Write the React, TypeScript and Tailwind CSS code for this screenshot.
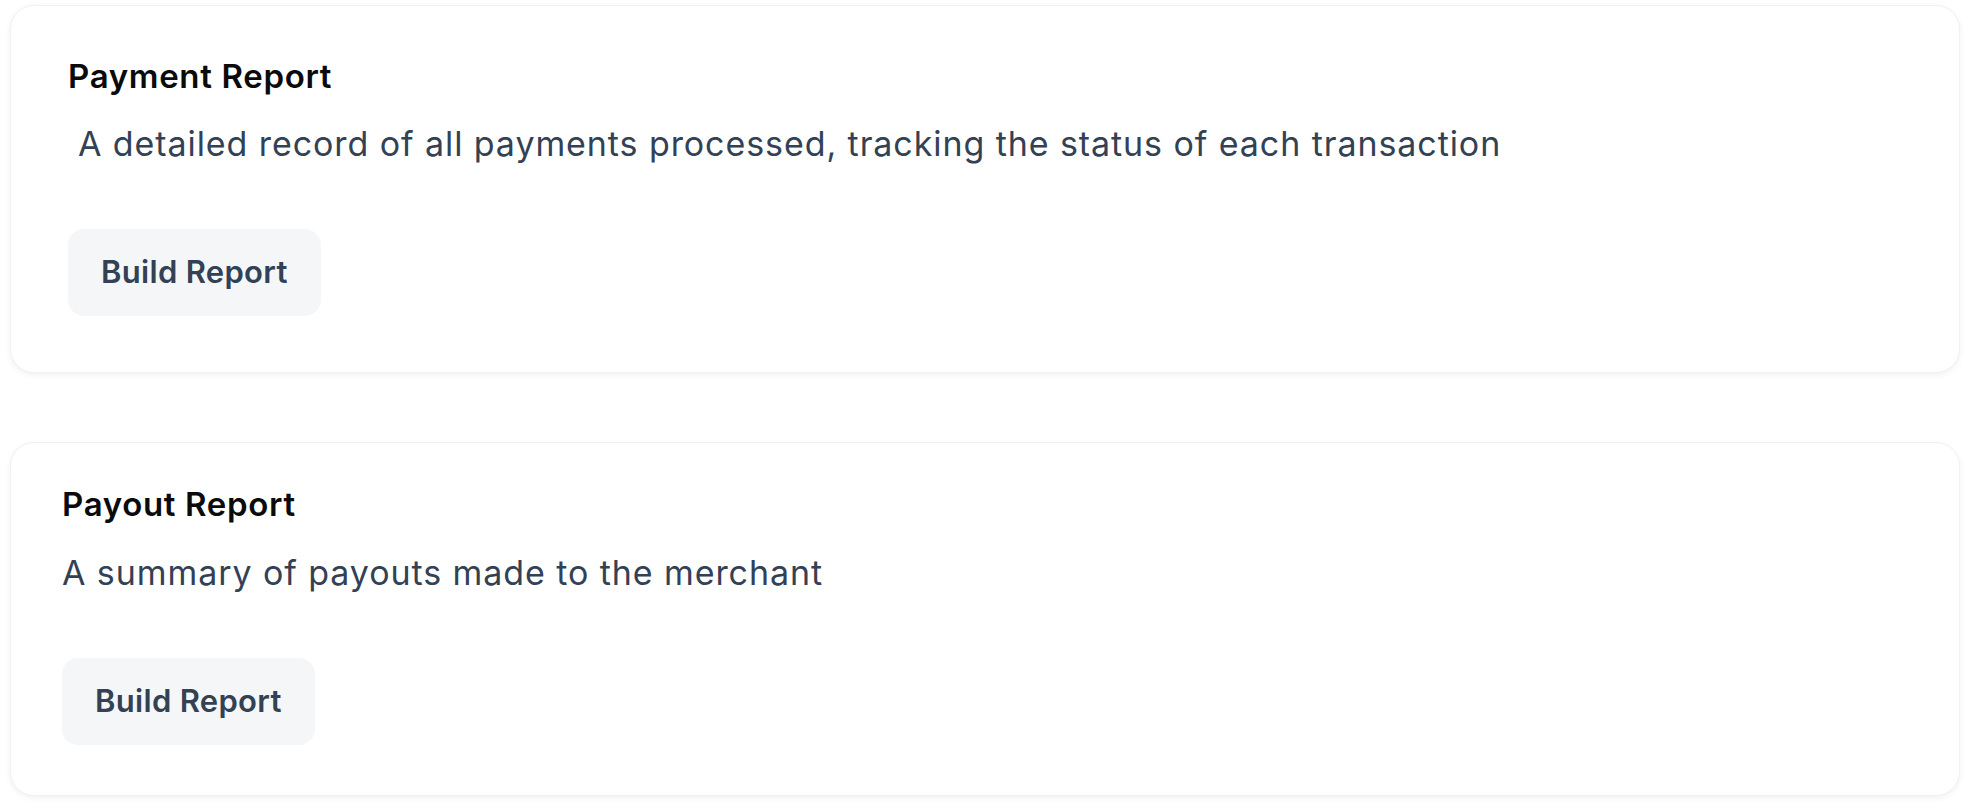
type Report = {
  title: string;
  description: string;
};

const reports: Report[] = [
  {
    title: "Payment Report",
    description:
      "A detailed record of all payments processed, tracking the status of each transaction",
  },
  { title: "Payout Report", description: "A summary of payouts made to the merchant" },
];

function BuildButton() {
  return (
    <button
      type="button"
      className="flex h-[87px] items-center self-start rounded-2xl bg-[#f4f6f8] px-[33px] text-[31px] font-semibold tracking-[0.01em] text-[#334155]"
    >
      Build Report
    </button>
  );
}

export default function App() {
  return (
    <div
      className="min-h-screen bg-white pt-[5px] pl-[10px] pr-[10px]"
      style={{ fontFamily: "Inter, 'Noto Sans', sans-serif" }}
    >
      <div className="flex flex-col gap-[69px]">
        {/* first card has a slightly roomier padding than the second */}
        <section className="flex flex-col rounded-3xl border border-[#f0f1f2] bg-white pt-[50px] pb-[56px] pl-[57px] shadow-[0_2px_6px_rgba(0,0,0,0.06)]">
          <h2 className="text-[33px] leading-[40px] font-semibold tracking-[0.02em] text-[#0b0b0c]">
            {reports[0].title}
          </h2>
          <p className="mt-[27px] pl-[10px] text-[34px] leading-[41px] tracking-[0.027em] text-[#334155]">
            {reports[0].description}
          </p>
          <div className="mt-[65px] flex">
            <BuildButton />
          </div>
        </section>

        <section className="flex flex-col rounded-3xl border border-[#f0f1f2] bg-white pt-[41px] pb-[50px] pl-[51px] shadow-[0_2px_6px_rgba(0,0,0,0.06)]">
          <h2 className="text-[33px] leading-[40px] font-semibold tracking-[0.02em] text-[#0b0b0c]">
            {reports[1].title}
          </h2>
          <p className="mt-[28px] text-[34px] leading-[41px] tracking-[0.027em] text-[#334155]">
            {reports[1].description}
          </p>
          <div className="mt-[65px] flex">
            <BuildButton />
          </div>
        </section>
      </div>
    </div>
  );
}
